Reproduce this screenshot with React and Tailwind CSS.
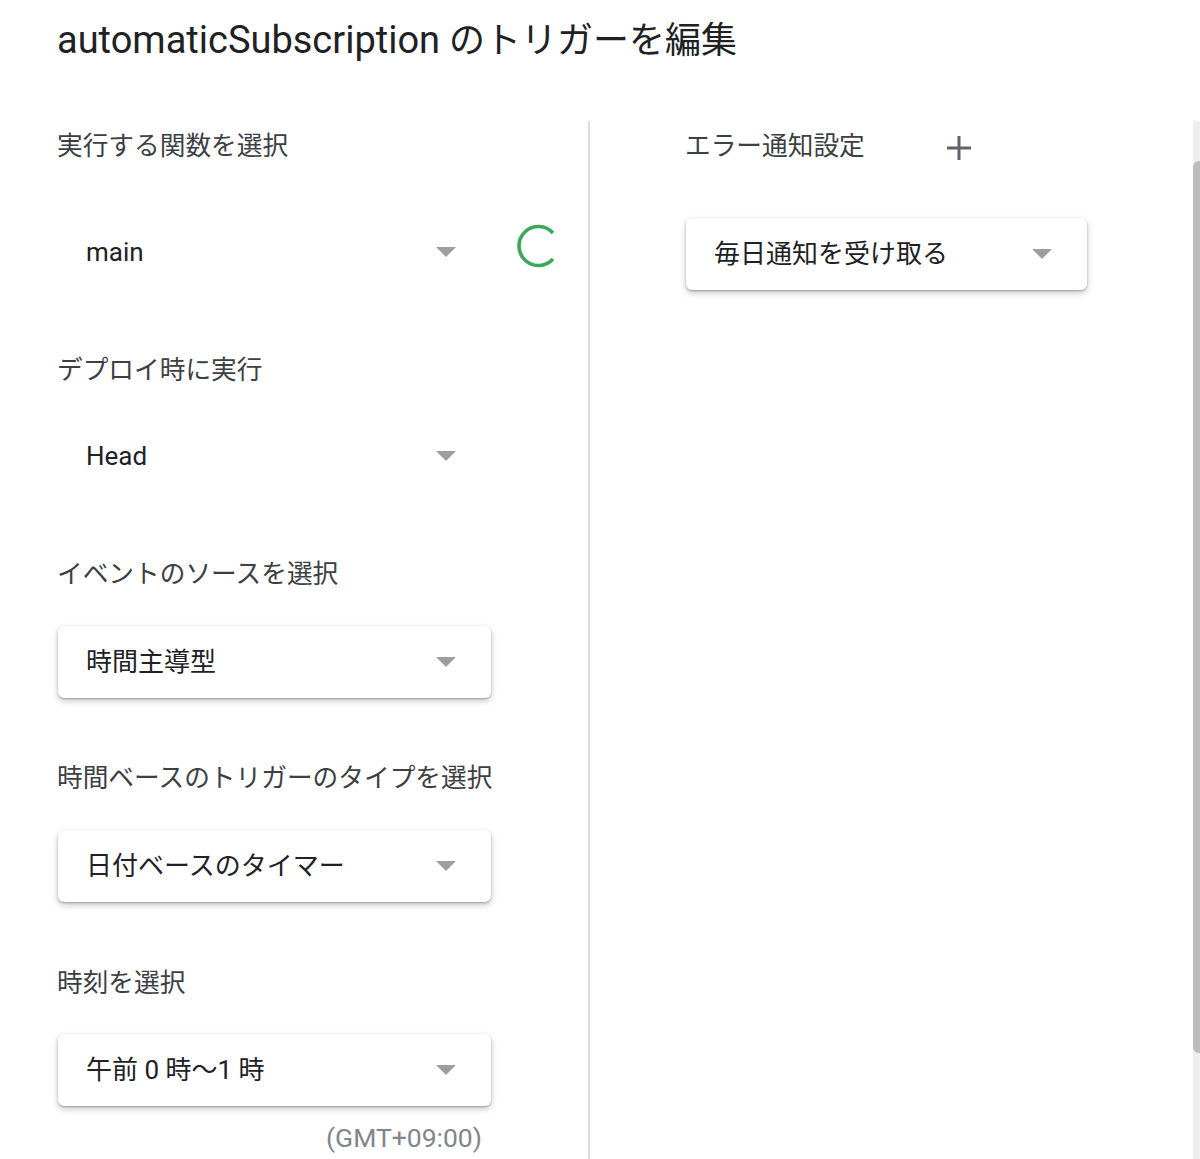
const FONT = "font-['Roboto','Noto_Sans_CJK_JP',sans-serif]"

function Arrow() {
  return (
    <svg width="20" height="10" viewBox="0 0 20 10" className="shrink-0">
      <path d="M0 0 L20 0 L10 10 Z" fill="#9e9e9e" />
    </svg>
  )
}

function Select({ value, raised = true, width = 'w-[433px]' }) {
  return (
    <div
      className={`${width} h-[72px] flex items-center justify-between pl-[28px] pr-[35px] rounded-[6px] ${
        raised ? 'bg-white shadow-[0_1px_2px_rgba(0,0,0,0.25),0_3px_7px_rgba(0,0,0,0.22)]' : ''
      }`}
    >
      <span className="text-[26px] text-[#202124] leading-none">{value}</span>
      <Arrow />
    </div>
  )
}

function Label({ children, className = '' }) {
  return <div className={`h-[40px] leading-[40px] text-[25.7px] text-[#3c4043] ${className}`}>{children}</div>
}

function Spinner() {
  return (
    <svg width="48" height="48" viewBox="0 0 48 48" className="self-start mt-[6px] ml-[25px]">
      <path
        d="M37 11 A19.5 19.5 0 1 0 37 37"
        fill="none"
        stroke="#3ea85a"
        strokeWidth="3.6"
        strokeLinecap="butt"
      />
    </svg>
  )
}

export default function App() {
  return (
    <div className={`w-[1200px] h-[1159px] overflow-hidden bg-white ${FONT}`}>
      <h1 className="pt-[16px] pl-[57px] h-[121px] text-[36px] leading-[48px] font-normal text-[#202124]">
        <span className="text-[38px]">automaticSubscription</span> のトリガーを編集
      </h1>

      <div className="flex h-[1038px]">
        <div className="w-[588px] pl-[58px] flex flex-col">
          <Label className="-ml-px mt-[5px]">実行する関数を選択</Label>
          <div className="flex items-center mt-[50px]">
            <Select value="main" raised={false} />
            <Spinner />
          </div>

          <Label className="-ml-px mt-[62px]">デプロイ時に実行</Label>
          <div className="mt-[30px]">
            <Select value="Head" raised={false} />
          </div>

          <Label className="-ml-px mt-[62px]">イベントのソースを選択</Label>
          <div className="mt-[32px]">
            <Select value="時間主導型" />
          </div>

          <Label className="-ml-px mt-[60px]">時間ベースのトリガーのタイプを選択</Label>
          <div className="mt-[32px]">
            <Select value="日付ベースのタイマー" />
          </div>

          <Label className="-ml-px mt-[61px]">時刻を選択</Label>
          <div className="mt-[31px]">
            <Select value="午前 0 時〜1 時" />
          </div>

          <div className="w-[433px] mt-[12px] pr-[9px] h-[40px] leading-[40px] text-right text-[26.5px] text-[#80868b]">
            (GMT+09:00)
          </div>
        </div>

        <div className="flex-1 border-l-2 border-[#dadce0] pl-[95px] flex flex-col">
          <div className="flex items-center mt-[5px]">
            <Label>エラー通知設定</Label>
            <svg width="24" height="24" viewBox="0 0 24 24" className="ml-[82px] mt-[4px]">
              <path d="M12 0 V24 M0 12 H24" stroke="#5f6368" strokeWidth="3" />
            </svg>
          </div>
          <div className="mt-[52px] ml-px">
            <Select value="毎日通知を受け取る" width="w-[401px]" />
          </div>
        </div>

        <div className="w-[7px] bg-[#eeeeee] flex flex-col">
          <div className="mt-[40px] h-[892px] bg-[#bdbdbd] rounded-l-[6px]" />
        </div>
      </div>
    </div>
  )
}
